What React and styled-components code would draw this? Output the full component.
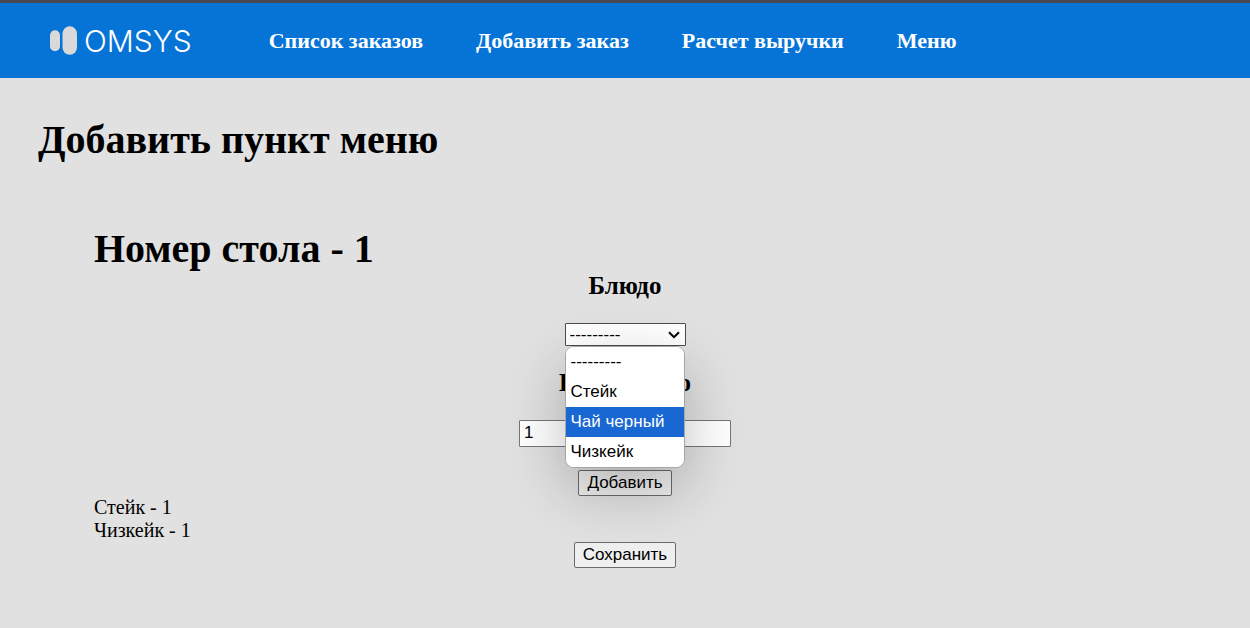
import React, { useState } from "react";
import styled, { createGlobalStyle } from "styled-components";

const GlobalStyle = createGlobalStyle`
  * { box-sizing: border-box; }
  body {
    margin: 0;
    background: #e1e1e1;
    color: #000;
    font: 20px/23px "Liberation Serif", "Times New Roman", serif;
  }
`;

const Header = styled.header`
  display: flex;
  align-items: center;
  gap: 77px;
  height: 78px;
  padding: 0 50px;
  background: #0674d7;
  border-top: 3px solid #484850;
`;

const Logo = styled.a`
  display: flex;
  align-items: center;
  gap: 6px;
  color: #fff;
  font: 300 30px/40px Inter, sans-serif;
  text-decoration: none;
`;

const Nav = styled.nav`
  display: flex;
  gap: 53px;
`;

const NavLink = styled.a`
  color: #fff;
  font-size: 22px;
  line-height: 28px;
  font-weight: 700;
  text-decoration: none;
`;

const Main = styled.main`
  padding: 39px 38px;
`;

const Title = styled.h1`
  margin: 0;
  font-size: 40px;
  line-height: 46px;
`;

const Form = styled.form`
  display: flex;
  flex-direction: column;
  padding: 63px 56px 0;
`;

const Field = styled.div`
  display: flex;
  flex-direction: column;
  align-items: center;
  gap: 23px;
  margin-bottom: 23px;
`;

const Label = styled.label`
  font-size: 25px;
  line-height: 28px;
  font-weight: 700;
`;

const SelectBox = styled.div`
  position: relative;
  display: flex;
  width: 121px;
`;

const Select = styled.select`
  appearance: none;
  width: 100%;
  height: 23px;
  padding: 0 4px;
  border: 1px solid #4c4c4c;
  border-radius: 1px;
  background: #fff;
  color: #000;
  font: 17px/20px "Liberation Sans", Arial, sans-serif;
`;

const Arrow = styled.svg`
  position: absolute;
  top: 8px;
  right: 6px;
  pointer-events: none;
`;

const Options = styled.ul`
  position: absolute;
  z-index: 1;
  top: 100%;
  left: 0;
  right: 1px;
  margin: 0;
  padding: 0;
  overflow: hidden;
  list-style: none;
  background: #fff;
  border: 1px solid #a6a6a6;
  border-radius: 9px;
  box-shadow: 0 20px 60px rgba(0, 0, 0, 0.25);
`;

const Option = styled.li`
  padding: 0 5px;
  background: ${(p) => (p.$active ? "#1967d2" : "#fff")};
  color: ${(p) => (p.$active ? "#fff" : "#000")};
  font: 17px/30px "Liberation Sans", Arial, sans-serif;
  white-space: nowrap;
`;

const Input = styled.input`
  width: 212px;
  height: 27px;
  padding: 0 4px 2px;
  border: 1px solid #767676;
  border-radius: 1px;
  background: #fff;
  color: #000;
  font: 17px/20px "Liberation Sans", Arial, sans-serif;
`;

const Button = styled.button`
  align-self: center;
  height: 26px;
  padding: 0 8px 1px;
  border: 1px solid #6b6b6b;
  border-radius: 2px;
  background: #efefef;
  color: #000;
  font: 17px/20px "Liberation Sans", Arial, sans-serif;
`;

const Order = styled.ul`
  margin: 0;
  padding: 0;
  list-style: none;
`;

const LINKS = ["Список заказов", "Добавить заказ", "Расчет выручки", "Меню"];
const DISHES = ["---------", "Стейк", "Чай черный", "Чизкейк"];
const ORDER = ["Стейк - 1", "Чизкейк - 1"];

export default function App() {
  const [dish, setDish] = useState(DISHES[0]);
  const [amount, setAmount] = useState("1");

  return (
    <>
      <GlobalStyle />
      <Header>
        <Logo href="#">
          <svg width="28" height="30" viewBox="0 0 28 30" aria-hidden="true">
            <rect x="0" y="4.3" width="10" height="21" rx="5" fill="#d9d9d9" />
            <rect x="12.5" y="0.3" width="14.5" height="28.5" rx="7.25" fill="#d9d9d9" />
          </svg>
          OMSYS
        </Logo>
        <Nav>
          {LINKS.map((text) => (
            <NavLink href="#" key={text}>{text}</NavLink>
          ))}
        </Nav>
      </Header>
      <Main>
        <Title>Добавить пункт меню</Title>
        <Form onSubmit={(e) => e.preventDefault()}>
          <Title as="h2">Номер стола - 1</Title>
          <Field>
            <Label htmlFor="dish">Блюдо</Label>
            <SelectBox>
              <Select id="dish" value={dish} onChange={(e) => setDish(e.target.value)}>
                {DISHES.map((name) => (
                  <option key={name}>{name}</option>
                ))}
              </Select>
              <Arrow width="12" height="8" viewBox="0 0 12 8" aria-hidden="true">
                <path d="M1 1.2 6 6.2 11 1.2" fill="none" stroke="#000" strokeWidth="2" />
              </Arrow>
              <Options>
                {DISHES.map((name) => (
                  <Option key={name} $active={name === "Чай черный"} onClick={() => setDish(name)}>
                    {name}
                  </Option>
                ))}
              </Options>
            </SelectBox>
          </Field>
          <Field>
            <Label htmlFor="amount">Количество</Label>
            <Input id="amount" value={amount} onChange={(e) => setAmount(e.target.value)} />
          </Field>
          <Button type="button">Добавить</Button>
          <Order>
            {ORDER.map((line) => (
              <li key={line}>{line}</li>
            ))}
          </Order>
          <Button type="submit">Сохранить</Button>
        </Form>
      </Main>
    </>
  );
}
